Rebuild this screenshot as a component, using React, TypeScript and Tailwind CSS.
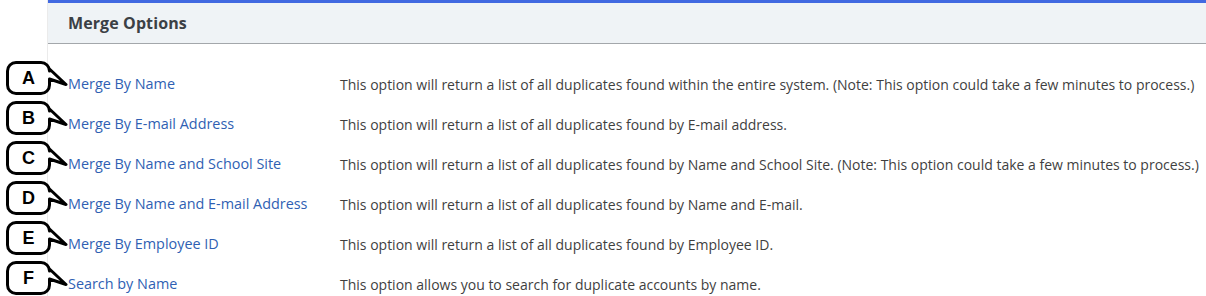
import React from 'react';

const options = [
  {
    tag: 'A',
    label: 'Merge By Name',
    text: 'This option will return a list of all duplicates found within the entire system. (Note: This option could take a few minutes to process.)',
  },
  {
    tag: 'B',
    label: 'Merge By E-mail Address',
    text: 'This option will return a list of all duplicates found by E-mail address.',
  },
  {
    tag: 'C',
    label: 'Merge By Name and School Site',
    text: 'This option will return a list of all duplicates found by Name and School Site. (Note: This option could take a few minutes to process.)',
  },
  {
    tag: 'D',
    label: 'Merge By Name and E-mail Address',
    text: 'This option will return a list of all duplicates found by Name and E-mail.',
  },
  {
    tag: 'E',
    label: 'Merge By Employee ID',
    text: 'This option will return a list of all duplicates found by Employee ID.',
  },
  {
    tag: 'F',
    label: 'Search by Name',
    text: 'This option allows you to search for duplicate accounts by name.',
  },
];

// speech-bubble marker drawn over the row, tail points at the link
function Callout({ tag }: { tag: string }) {
  return (
    <div className="absolute left-[-62px] top-[-3px] w-[62px] h-[36px]">
      <svg width="62" height="36" viewBox="0 0 62 36" className="absolute inset-0">
        <path
          d="M10 1.5 H35 A8.5 8.5 0 0 1 43.5 10 V8 L60 23.5 L43.5 18 V24 A8.5 8.5 0 0 1 35 32.5 H10 A8.5 8.5 0 0 1 1.5 24 V10 A8.5 8.5 0 0 1 10 1.5 Z"
          fill="white"
          stroke="black"
          strokeWidth="3"
          strokeLinejoin="round"
        />
      </svg>
      <span className="absolute left-[1px] top-[6px] w-[43px] text-center text-[18px] leading-[22px] font-bold text-black font-['Liberation_Sans',Arial,sans-serif]">
        {tag}
      </span>
    </div>
  );
}

export default function App() {
  return (
    <div className="w-[1206px] h-[296px] overflow-hidden bg-white flex font-['Open_Sans',sans-serif]">
      <div className="w-[47px] shrink-0" />
      <div className="flex-1 border-l border-[#ebebeb]">
        <div className="border-t-[3px] border-[#4169e1]" />
        <div className="h-[41px] bg-[#eff3f6] border-b border-[#a3a7ab] flex items-center px-5">
          <h2 className="text-[16px] font-bold text-[#3b4045] tracking-[0.1px]">Merge Options</h2>
        </div>
        <div className="pt-5 px-5">
          {options.map((o) => (
            <div key={o.tag} className="relative h-10 flex items-center text-[14px]">
              <Callout tag={o.tag} />
              <a href="#" className="w-[272px] shrink-0 text-[14.4px] text-[#2f5fb3]">
                {o.label}
              </a>
              <span className="text-[#3f3f3f] whitespace-nowrap">{o.text}</span>
            </div>
          ))}
        </div>
      </div>
    </div>
  );
}
